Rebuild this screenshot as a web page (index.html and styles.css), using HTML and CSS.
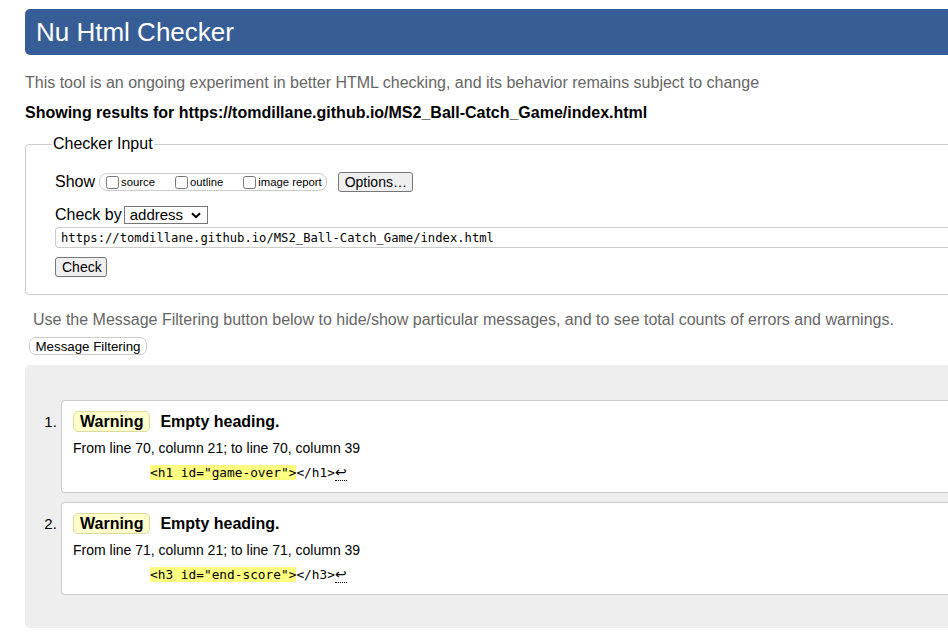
FILE: index.html
```html
<!DOCTYPE html>
<html lang="en">
<head>
<meta charset="utf-8">
<title>Nu Html Checker</title>
<link rel="stylesheet" href="styles.css">
</head>
<body>
<div class="page">
  <header class="banner"><h1>Nu Html Checker</h1></header>
  <p class="intro">This tool is an ongoing experiment in better HTML checking, and its behavior remains subject to change</p>
  <p class="results-for">Showing results for https://tomdillane.github.io/MS2_Ball-Catch_Game/index.html</p>
  <form class="checker-form">
    <fieldset class="checker">
      <legend>Checker Input</legend>
      <div class="row show-row">
        <span class="show-label">Show</span>
        <span class="show-opts">
          <label class="opt"><input type="checkbox">source</label>
          <label class="opt"><input type="checkbox">outline</label>
          <label class="opt last"><input type="checkbox">image report</label>
        </span>
        <button type="button" class="btn options">Options…</button>
      </div>
      <div class="row by-row">
        <label class="by-label">Check by</label>
        <span class="select-wrap">
          <select class="select"><option>address</option></select>
          <svg class="chev" width="10" height="7" viewBox="0 0 10 7"><path d="M1 1.2 L5 5.2 L9 1.2" fill="none" stroke="#000" stroke-width="2"/></svg>
        </span>
      </div>
      <input class="url" type="text" value="https://tomdillane.github.io/MS2_Ball-Catch_Game/index.html">
      <div class="row check-row"><button type="button" class="btn check">Check</button></div>
    </fieldset>
  </form>
  <p class="filter-note">Use the Message Filtering button below to hide/show particular messages, and to see total counts of errors and warnings.</p>
  <button type="button" class="filter-btn">Message Filtering</button>
  <div class="results">
    <ol class="messages">
      <li>
        <div class="msg">
          <p class="msg-head"><strong class="badge">Warning</strong><span class="msg-text">Empty heading.</span></p>
          <p class="location">From line 70, column 21; to line 70, column 39</p>
          <p class="extract"><code><b class="hl">&lt;h1 id="game-over"&gt;</b>&lt;/h1&gt;<span class="lf" title="Line break">↩</span></code></p>
        </div>
      </li>
      <li>
        <div class="msg">
          <p class="msg-head"><strong class="badge">Warning</strong><span class="msg-text">Empty heading.</span></p>
          <p class="location">From line 71, column 21; to line 71, column 39</p>
          <p class="extract"><code><b class="hl">&lt;h3 id="end-score"&gt;</b>&lt;/h3&gt;<span class="lf" title="Line break">↩</span></code></p>
        </div>
      </li>
    </ol>
  </div>
</div>
</body>
</html>
```
FILE: styles.css
```css
html {
  overflow: hidden;
  background: #fff;
}
body {
  margin: 0;
  font-family: "Liberation Sans", Arial, sans-serif;
  font-size: 16px;
  color: #000;
}
.page {
  width: 1000px;
  padding-left: 25px;
}
.banner {
  margin-top: 9px;
  height: 46px;
  background: #365d95;
  border-radius: 5px;
}
.banner h1 {
  margin: 0;
  padding-left: 11px;
  font-size: 26px;
  font-weight: normal;
  line-height: 46px;
  color: #fff;
}
.intro {
  margin: 19px 0 0;
  line-height: 18px;
  color: #666;
}
.results-for {
  margin: 12px 0 0;
  line-height: 18px;
  font-weight: bold;
}
.checker-form {
  margin-top: 13px;
}
.checker {
  margin: 0;
  padding: 0 0 17px 29px;
  border: 1px solid #ccc;
  border-radius: 4px;
  min-width: 0;
}
.checker legend {
  margin-left: -3px;
  padding: 0 1px;
  line-height: 18px;
}
.row {
  display: flex;
  align-items: center;
}
.show-row {
  margin-top: 19px;
  height: 20px;
}
.show-label {
  margin-right: 4px;
}
.show-opts {
  display: flex;
  align-items: center;
  height: 18px;
  padding: 0 2px;
  border: 1px solid #ccc;
  border-radius: 8px;
  box-sizing: border-box;
}
.opt {
  display: flex;
  align-items: center;
  font-size: 11.3px;
  margin-right: 16px;
}
.opt.last {
  margin-right: 2px;
}
.opt input {
  margin: 0 2px 0 4px;
  width: 13px;
  height: 13px;
}
.btn {
  font-family: "Liberation Sans", Arial, sans-serif;
  font-size: 14px;
  height: 20px;
  padding: 0 6px;
  background: #efefef;
  border: 1px solid #767676;
  border-radius: 3px;
  color: #000;
}
.options {
  margin-left: 11px;
  width: 75px;
}
.by-row {
  margin-top: 14px;
  height: 18px;
}
.by-label {
  margin-right: 2px;
}
.select-wrap {
  position: relative;
  display: inline-block;
}
.select {
  appearance: none;
  -webkit-appearance: none;
  width: 84px;
  height: 18px;
  padding: 0 0 0 5px;
  margin: 0;
  border: 1px solid #767676;
  border-radius: 0;
  background: #fff;
  font-family: "Liberation Sans", Arial, sans-serif;
  font-size: 15px;
  line-height: 16px;
  color: #000;
  display: block;
}
.chev {
  position: absolute;
  right: 7px;
  top: 6px;
}
.url {
  display: block;
  margin-top: 3px;
  width: 100%;
  height: 21px;
  box-sizing: border-box;
  padding: 0 5px;
  border: 1px solid #ccc;
  border-right: none;
  border-radius: 4px 0 0 4px;
  font-family: "DejaVu Sans Mono", monospace;
  font-size: 12.2px;
  color: #000;
}
.check-row {
  margin-top: 9px;
}
.check {
  width: 52px;
}
.filter-note {
  margin: 16px 0 0;
  padding-left: 8px;
  line-height: 18px;
  color: #666;
}
.filter-btn {
  display: block;
  margin: 8px 0 0 4px;
  width: 118px;
  height: 18px;
  padding: 0;
  font-family: "Liberation Sans", Arial, sans-serif;
  font-size: 13.3px;
  background: #fff;
  border: 1px solid #ccc;
  border-radius: 7px;
  color: #000;
}
.results {
  margin-top: 10px;
  height: 263px;
  box-sizing: border-box;
  background: #eee;
  border-radius: 5px;
  padding-top: 35px;
}
.messages {
  margin: 0;
  padding-left: 36px;
  font-size: 14px;
}
.messages li {
  margin-bottom: 9px;
}
.messages li::marker {
  font-size: 15px;
}
.msg {
  background: #fff;
  border: 1px solid #ccc;
  border-right: none;
  border-radius: 4px 0 0 4px;
  height: 93px;
  box-sizing: border-box;
  padding: 10px 0 0 11px;
}
.msg-head {
  margin: 0;
  display: flex;
  align-items: center;
  height: 21px;
  font-size: 16px;
}
.badge {
  display: inline-block;
  height: 21px;
  line-height: 19px;
  box-sizing: border-box;
  padding: 0 6px;
  background: #ffffcc;
  border: 1px solid #ddd7a0;
  border-radius: 5px;
  font-weight: bold;
}
.msg-text {
  margin-left: 10px;
  font-weight: bold;
}
.location {
  margin: 7px 0 0;
  line-height: 18px;
}
.extract {
  margin: 7px 0 0 77px;
  line-height: 17px;
}
.extract code {
  font-family: "DejaVu Sans Mono", monospace;
  font-size: 12.8px;
}
.hl {
  font-weight: normal;
  background: #ffff80;
}
.lf {
  font-family: "DejaVu Sans", sans-serif;
  font-size: 14px;
  border-bottom: 1px dotted #000;
}
```
